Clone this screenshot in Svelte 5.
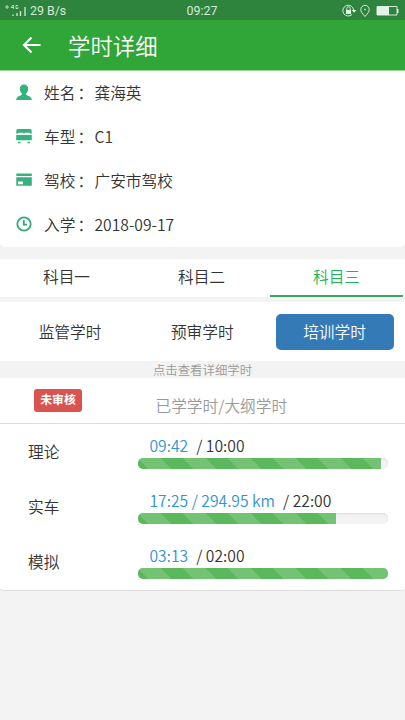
<script lang="ts">
    let subjects = ['科目一', '科目二', '科目三'];
    let modes = ['监管学时', '预审学时', '培训学时'];
    let subject = $state(2);
    let mode = $state(2);

    let info = [
        { icon: 'user', label: '姓名', value: '龚海英' },
        { icon: 'car', label: '车型', value: 'C1' },
        { icon: 'card', label: '驾校', value: '广安市驾校' },
        { icon: 'clock', label: '入学', value: '2018-09-17' }
    ];

    let rows = [
        { name: '理论', done: '09:42', total: '10:00', percent: 97 },
        { name: '实车', done: '17:25 / 294.95 km', total: '22:00', percent: 79 },
        { name: '模拟', done: '03:13', total: '02:00', percent: 100 }
    ];
</script>

<main>
    <div class="status">
        <div class="net">
            <svg width="24" height="14" viewBox="0 0 24 14">
                <path d="M0 3h4M2 1v4M8 1L6 3.500h3M8.500 1v4M13 1.500h-2v3h2v-1.500" class="thin" />
                <path d="M8 10.500v1.500M12 9v3M15.500 7v5M20 3v9" class="bars" />
            </svg>
            <span>29 B/s</span>
        </div>
        <span class="time">09:27</span>
        <svg class="tray" width="57" height="14" viewBox="0 0 57 14">
            <path d="M10 10.500A5.400 5.400 0 1 1 11.600 6" class="line" />
            <path d="M9.800 6h4.500l-2.300 2.800z" class="solid" />
            <path d="M4 6h5v4H4z" class="solid" />
            <path d="M4.800 6V4.500a1.700 1.700 0 0 1 3.400 0V6" class="line" />
            <path d="M23 12.500C20 9 18.800 8 18.800 5.500a4.200 4.200 0 0 1 8.400 0C27.200 8 26 9 23 12.500z" class="line" />
            <circle cx="23" cy="5.500" r="0.800" class="solid" />
            <path d="M35 2.500h20v8.500H35z" class="line" />
            <path d="M35 2.500h12v8.500H35zM55 5h1.500v4H55z" class="solid" />
        </svg>
    </div>

    <header>
        <svg width="20" height="18" viewBox="0 0 20 18">
            <path d="M18.500 9H2M9.500 1.500L2 9l7.500 7.500" />
        </svg>
        <h1>学时详细</h1>
    </header>

    <ul class="info">
        {#each info as item}
            <li>
                <svg width="16" height="16" viewBox="0 0 16 16">
                    {#if item.icon === 'user'}
                        <path d="M8 .5c2.600 0 4.200 1.600 4.200 4.300 0 2-.8 3.700-2 4.600v1.300c.8 1 5.500 1.200 5.700 5.300H.1c.2-4.100 4.900-4.300 5.700-5.300V9.400c-1.200-.9-2-2.600-2-4.600C3.800 2.100 5.400.5 8 .5z" />
                    {:else if item.icon === 'car'}
                        <path d="M2 1h12q1.700 0 1.700 1.700V5.800H14.500L13.500 4.800H9L8 5.800 7 4.800H2.500L1.500 5.800H.3V2.700Q.3 1 2 1zM.2 7h15.600v5.300H.2zM2 13.800h2.500v1.500H2zM11.500 13.800H14v1.500h-2.500z" />
                    {:else if item.icon === 'card'}
                        <path fill-rule="evenodd" d="M.3 1.500h15.500V4H.3zM.3 5.200h15.500v8.600H.3zM2 9.500v2.800h5V9.500z" />
                    {:else}
                        <circle cx="8" cy="8" r="6.700" />
                        <path class="hands" d="M7.800 4v4.600h3.200" />
                    {/if}
                </svg>
                <span class="label">{item.label}<i>：</i></span>
                <span>{item.value}</span>
            </li>
        {/each}
    </ul>

    <nav class="subjects">
        {#each subjects as name, i}
            <button class:active={subject === i} onclick={() => (subject = i)}>{name}</button>
        {/each}
    </nav>

    <div class="modes">
        {#each modes as name, i}
            <button class:active={mode === i} onclick={() => (mode = i)}>{name}</button>
        {/each}
    </div>

    <p class="hint">点击查看详细学时</p>

    <section class="hours">
        <div class="head">
            <div class="cell"><span class="badge">未审核</span></div>
            <span class="caption">已学学时/大纲学时</span>
        </div>
        {#each rows as row}
            <div class="row">
                <span class="name">{row.name}</span>
                <div class="detail">
                    <p><span class="done">{row.done}</span><span>/ {row.total}</span></p>
                    <div class="progress">
                        <div class="bar" style="width: {row.percent}%"></div>
                    </div>
                </div>
            </div>
        {/each}
    </section>
</main>

<style>
    :global(body) {
        background: #f3f3f3;
    }

    main {
        height: 720px;
        overflow: hidden;
        background: #f3f3f3;
        color: #333;
        font-family: "Noto Sans CJK SC", sans-serif;
        font-size: 15.7px;
        font-weight: 350;
        line-height: 22px;
    }

    h1, p, ul {
        margin: 0;
        padding: 0;
        font-weight: inherit;
    }

    button {
        border: 0;
        padding: 0;
        background: none;
        color: inherit;
        font: inherit;
    }

    .status {
        display: grid;
        grid-template-columns: 1fr auto 1fr;
        align-items: center;
        height: 20px;
        padding: 0 6px 0 5px;
        background: #2e843d;
        color: #d5ebd8;
        font-family: Roboto, sans-serif;
        font-size: 12.4px;
        font-weight: 400;
    }

    .net {
        display: flex;
        align-items: center;
        gap: 1px;
    }

    .status svg {
        fill: none;
        stroke: #d5ebd8;
    }

    .status .thin {
        stroke-width: 0.8;
    }

    .status .bars {
        stroke-width: 1.3;
    }

    .status .line {
        stroke-width: 1;
    }

    .status .solid {
        fill: #e3f3e5;
        stroke: none;
    }

    .tray {
        justify-self: end;
    }

    header {
        display: flex;
        align-items: center;
        gap: 26px;
        height: 50px;
        padding-left: 22px;
        border-bottom: 1px solid #97d39b;
        background: #2fa637;
        color: #fff;
    }

    header svg {
        fill: none;
        stroke: #fff;
        stroke-width: 2.2;
    }

    h1 {
        font-size: 22.4px;
        line-height: 50px;
        height: 50px;
    }

    .info {
        height: 176px;
        background: #fff;
        border-radius: 0 0 5px 5px;
        list-style: none;
    }

    .info li {
        display: flex;
        align-items: center;
        height: 44px;
        padding-left: 16px;
    }

    .info svg {
        margin: -2px 12px 0 0;
        fill: #35b37e;
    }

    .info circle, .hands {
        fill: none;
        stroke: #35a978;
        stroke-width: 1.8;
    }

    .label {
        width: 50.5px;
        white-space: nowrap;
    }

    .label i {
        margin-left: 2px;
        font-style: normal;
    }

    .subjects {
        display: grid;
        grid-template-columns: repeat(3, 1fr);
        height: 38px;
        margin-top: 12px;
        background: #fff;
    }

    .subjects button {
        margin-right: 2px;
        padding-bottom: 1px;
        border-bottom: 2px solid transparent;
    }

    .subjects .active {
        border-color: #3ba766;
        color: #1fb35a;
    }

    .modes {
        display: grid;
        grid-template-columns: repeat(3, 118px);
        justify-content: space-between;
        align-items: center;
        height: 59px;
        margin-top: 5px;
        padding: 0 11.5px 0 11px;
        background: #fff;
    }

    .modes button {
        height: 36px;
        border-radius: 5px;
    }

    .modes .active {
        background: #337ab7;
        color: #fff;
    }

    .hint {
        height: 17px;
        color: #999;
        font-size: 12.4px;
        line-height: 19px;
        text-align: center;
    }

    .hours {
        background: #fff;
        border-bottom: 1px solid #ddd;
        border-radius: 0 0 4px 4px;
        height: 212px;
    }

    .head {
        display: flex;
        height: 45px;
        border-bottom: 1px solid #ddd;
    }

    .cell {
        width: 121.5px;
        padding: 11px 0 0 34px;
    }

    .badge {
        display: block;
        width: 48px;
        height: 23px;
        border-radius: 3px;
        background: #d9534f;
        color: #fff;
        font-size: 11.9px;
        font-weight: bold;
        line-height: 20px;
        text-align: center;
    }

    .caption {
        color: #999;
        line-height: 55px;
    }

    .row {
        display: flex;
        height: 55px;
    }

    .name {
        width: 110px;
        padding-left: 28px;
        line-height: 56px;
    }

    .detail {
        width: 250px;
        padding-top: 11px;
    }

    .detail p {
        padding-left: 11.5px;
    }

    .done {
        margin-right: 8px;
        color: #3193d3;
    }

    .progress {
        height: 11px;
        margin-top: 1px;
        overflow: hidden;
        border-radius: 5px;
        background: #f3f3f3;
        box-shadow: inset 0 1px 2px rgba(0, 0, 0, 0.1);
    }

    .bar {
        height: 100%;
        background-color: #5cb85c;
        background-image: linear-gradient(45deg, rgba(255, 255, 255, 0.15) 25%, transparent 25%, transparent 50%, rgba(255, 255, 255, 0.15) 50%, rgba(255, 255, 255, 0.15) 75%, transparent 75%, transparent);
        background-size: 45px 45px;
    }
</style>
